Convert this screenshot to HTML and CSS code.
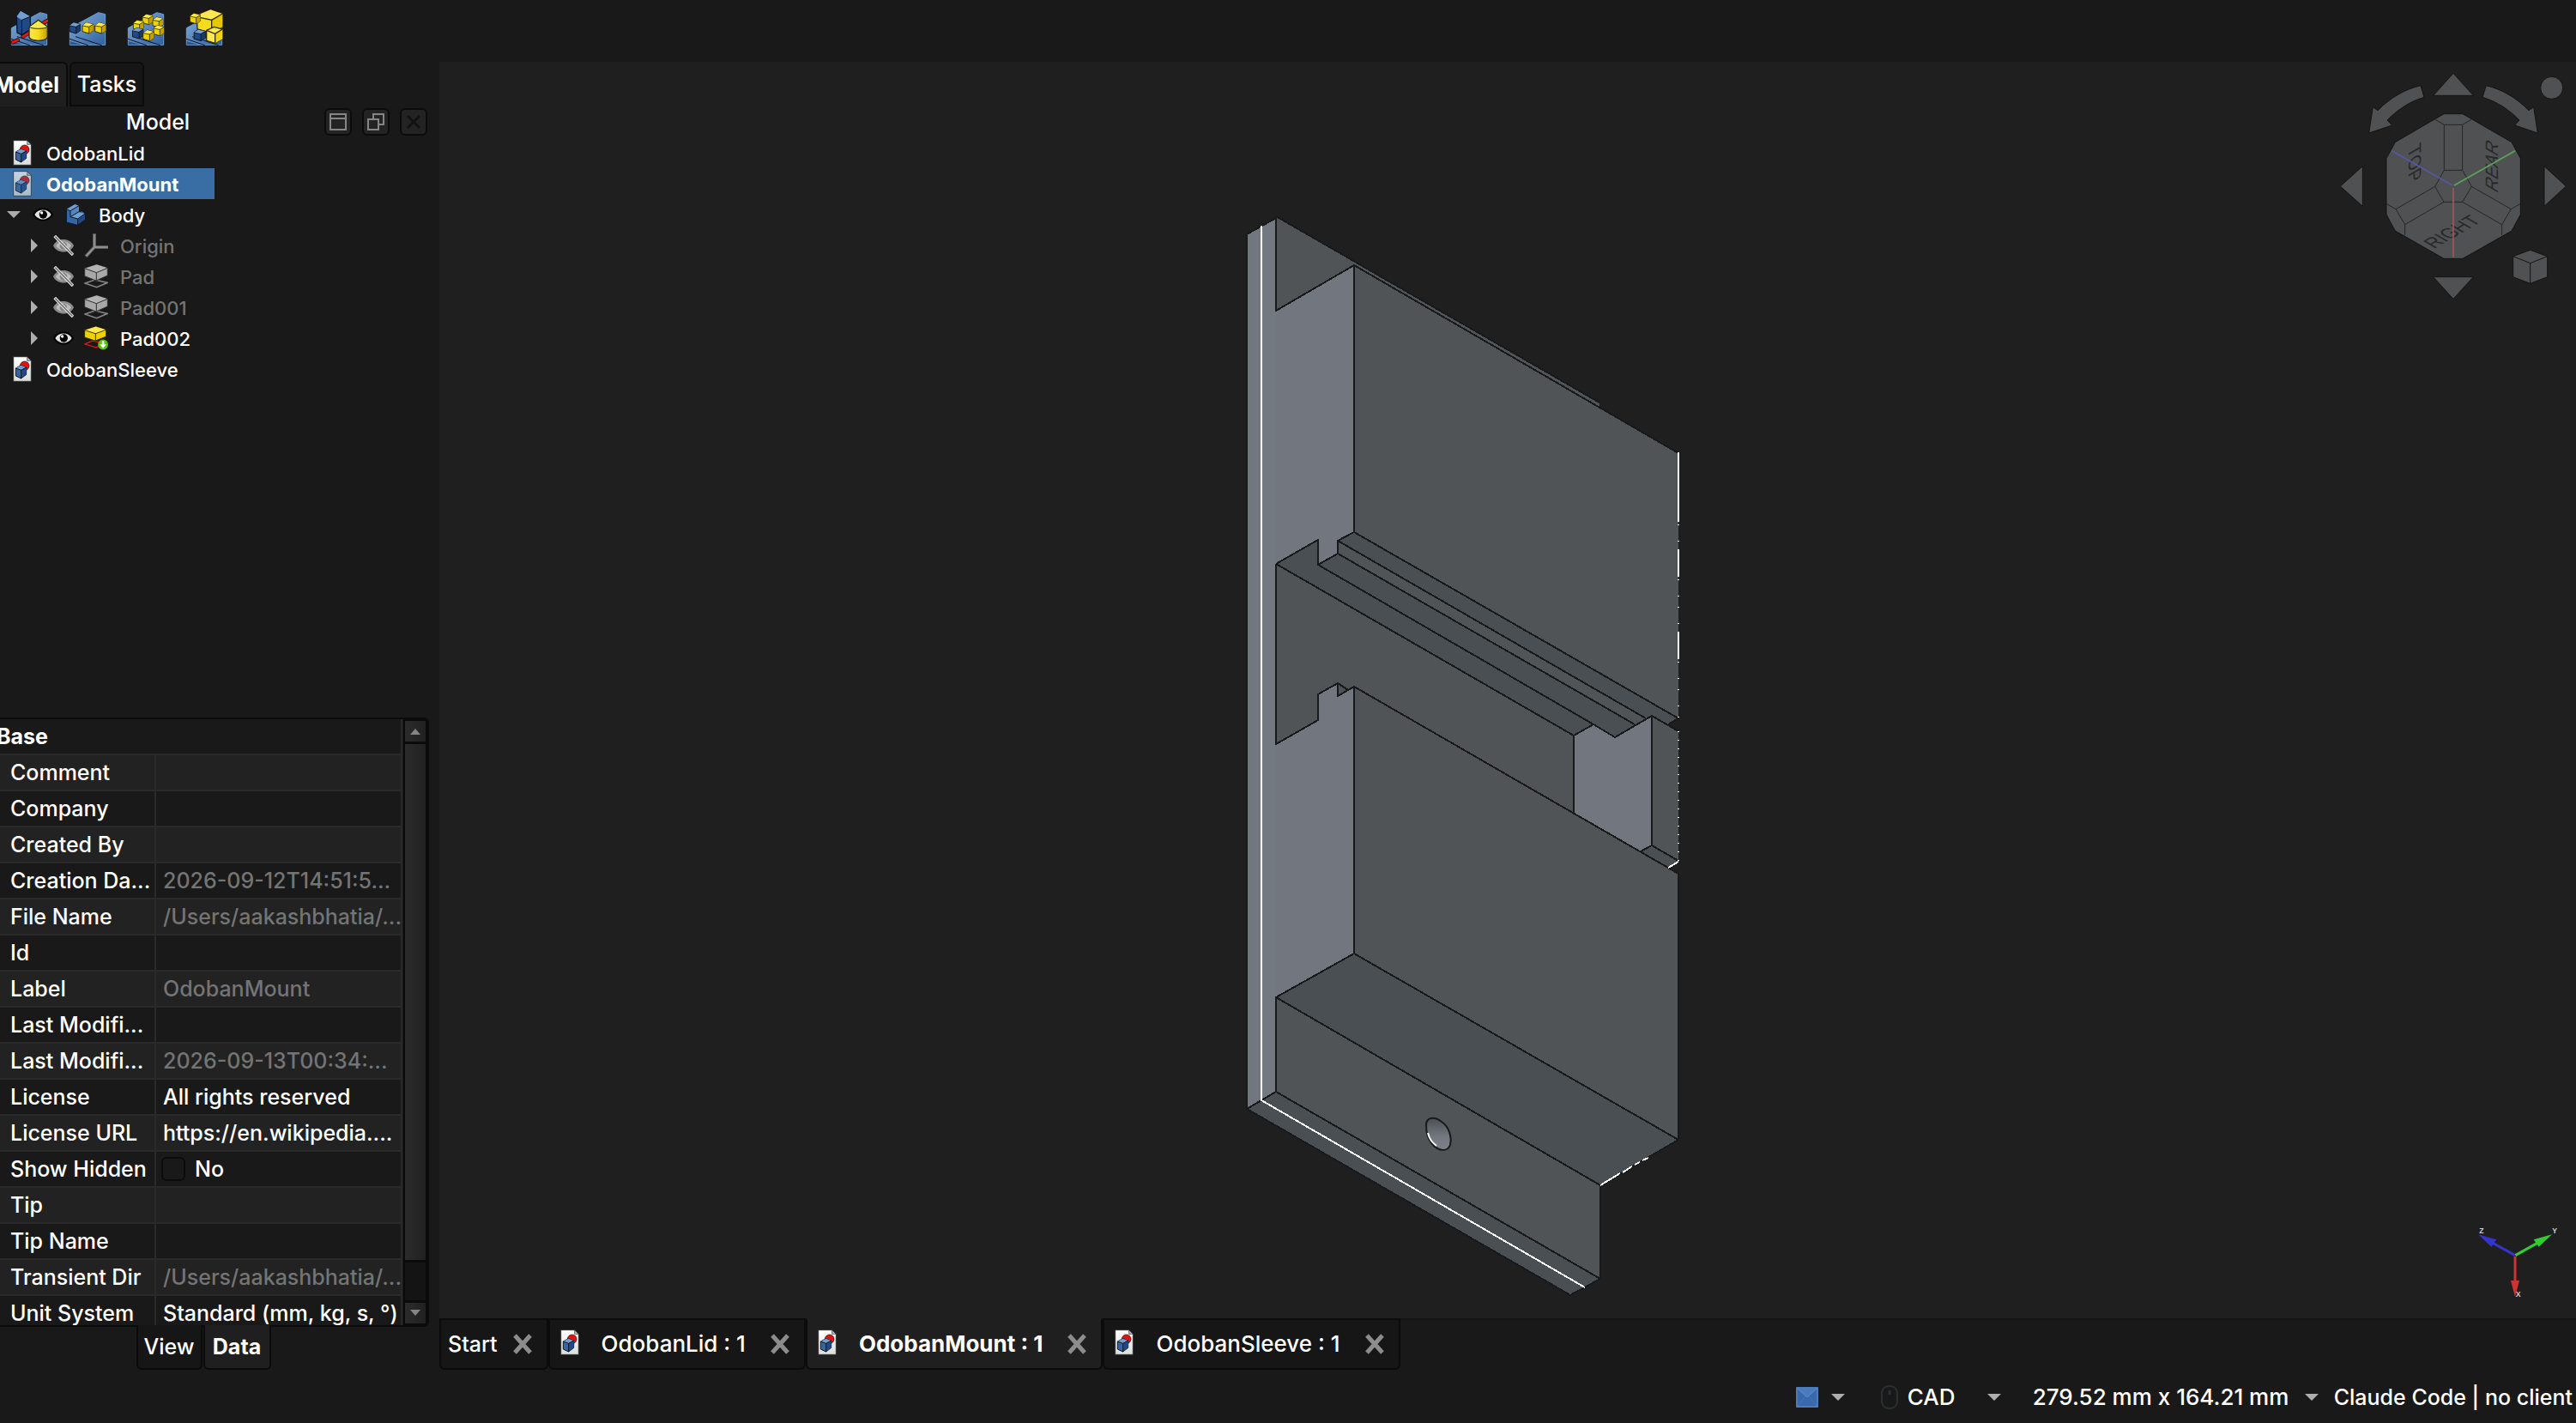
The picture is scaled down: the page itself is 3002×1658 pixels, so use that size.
FILE: index.html
```html
<!DOCTYPE html>
<html lang="en">
<head>
<meta charset="utf-8">
<title>OdobanMount</title>
<link rel="stylesheet" href="styles.css">
</head>
<body>
<svg class="defs" aria-hidden="true">
  <defs>
    <linearGradient id="gBlue" x1="0" y1="0" x2="1" y2="1"><stop offset="0" stop-color="#85afdc"/><stop offset="1" stop-color="#2f5f9f"/></linearGradient>
    <linearGradient id="gYellow" x1="0" y1="0" x2="1" y2="0"><stop offset="0" stop-color="#fce94f"/><stop offset=".5" stop-color="#f5dc1e"/><stop offset="1" stop-color="#c4a000"/></linearGradient>
    <linearGradient id="gPage" x1="0" y1="0" x2="0" y2="1"><stop offset="0" stop-color="#ffffff"/><stop offset="1" stop-color="#dcdeda"/></linearGradient>
    <linearGradient id="gHole" x1="0" y1="0" x2="0" y2="1"><stop offset="0" stop-color="#4c5054"/><stop offset=".6" stop-color="#747981"/><stop offset="1" stop-color="#7d828a"/></linearGradient>
  </defs>
  <symbol id="cubeYellow" viewBox="0 0 42 44">
    <path d="M2 14 16 3 40 9 40 31 25 41 2 34Z" fill="#edd400" stroke="#302b00" stroke-width="3" stroke-linejoin="round"/>
    <path d="M2 14 16 3 40 9 25 18Z" fill="#fce94f"/><path d="M25 18 40 9V31L25 41Z" fill="#c4a000"/>
    <path d="M2 14 25 18V41M25 18 40 9" fill="none" stroke="#302b00" stroke-width="2.500"/>
  </symbol>
  <symbol id="cubeBlue" viewBox="0 0 42 44">
    <path d="M2 14 16 3 40 9 40 31 25 41 2 34Z" fill="#204a87" stroke="#0b1521" stroke-width="3" stroke-linejoin="round"/>
    <path d="M2 14 16 3 40 9 25 18Z" fill="#729fcf"/><path d="M25 18 40 9V31L25 41Z" fill="#163a6c"/>
    <path d="M2 14 25 18V41M25 18 40 9" fill="none" stroke="#0b1521" stroke-width="2.500"/>
  </symbol>
  <symbol id="wedge" viewBox="0 0 132 132">
    <path d="M4 68 104 14 128 20V127H4Z" fill="url(#gBlue)" stroke="#729fcf" stroke-width="3"/>
    <path d="M3 106 68 128M24 98 116 128" fill="none" stroke="#0b1521" stroke-width="3"/>
    <path d="M5 114 44 126H5Z" fill="#2b5797"/>
  </symbol>
  <symbol id="doc" viewBox="0 0 66 90">
    <path d="M2 2H50L64 16V88H2Z" fill="url(#gPage)" stroke="#2e3436" stroke-width="3"/>
    <path d="M50 2 64 16H50Z" fill="#babdb6" stroke="#2e3436" stroke-width="2"/>
    <circle cx="41" cy="34" r="16" fill="#dc1414" stroke="#280000" stroke-width="2"/>
    <path d="M10 42 28 32 47 39 47 64 29 78 10 69Z" fill="#3465a4" stroke="#0b1521" stroke-width="3"/>
    <path d="M10 42 28 32 47 39 29 49Z" fill="#729fcf"/><path d="M29 49 47 39V64L29 78Z" fill="#204a87"/>
    <path d="M10 42 29 49V78M29 49 47 39" fill="none" stroke="#0b1521" stroke-width="3"/>
  </symbol>
  <symbol id="eye" viewBox="0 0 72 48">
    <path d="M0 24C14-6 58-6 72 24 58 54 14 54 0 24Z" fill="#000"/>
    <path d="M7 24C20 2 52 2 65 24 52 46 20 46 7 24Z" fill="#e4e4e4"/>
    <circle cx="37" cy="24" r="14" fill="#000"/><circle cx="32" cy="18" r="5" fill="#fff"/>
  </symbol>
  <symbol id="eyeOff" viewBox="0 0 72 72">
    <path d="M0 37C14 8 58 8 72 37 58 66 14 66 0 37Z" fill="#8c8c8c"/>
    <path d="M9 37C22 18 50 18 63 37 50 56 22 56 9 37Z" fill="#bdbdbd"/>
    <circle cx="36" cy="37" r="13" fill="#858585"/>
    <path d="M5 3 69 69" stroke="#dedede" stroke-width="11"/><path d="M7 5 67 67" stroke="#686868" stroke-width="4"/>
  </symbol>
  <symbol id="padOff" viewBox="0 0 84 84">
    <path d="M3 66 38 54 82 64 44 80Z" fill="none" stroke="#858585" stroke-width="5"/>
    <path d="M2 14 44 1 82 13V39L42 57 2 41Z" fill="#a8a8a8" stroke="#303030" stroke-width="3"/>
    <path d="M2 14 44 1 82 13 43 29Z" fill="#b4b4b4"/><path d="M2 14 43 29V56M43 29 82 13" fill="none" stroke="#303030" stroke-width="3"/>
  </symbol>
  <symbol id="right" viewBox="0 0 24 48"><path d="M0 0 24 24 0 48Z" fill="#aeaeae"/></symbol>
  <symbol id="down" viewBox="0 0 48 24"><path d="M0 0H48L24 24Z" fill="#aeaeae"/></symbol>
  <symbol id="cross" viewBox="0 0 24 24"><path d="M3 2 21 22M21 2 3 22" stroke="#8c8c8c" stroke-width="5"/></symbol>
</svg>

<div class="app">
  <header class="toolbar">
    <button class="tool" aria-label="Mirrored"><svg viewBox="0 0 132 132">
      <use href="#wedge"/>
      <path d="M8 118 26 110M44 98 62 86M116 50 130 42" stroke="#280000" stroke-width="14" stroke-linecap="round"/>
      <path d="M8 118 26 110M44 98 62 86M116 50 130 42" stroke="#e01818" stroke-width="9" stroke-linecap="round"/>
      <path d="M22 28 36 8 70 28V74L40 92 24 84Z" fill="#204a87" stroke="#0b1521" stroke-width="4"/>
      <path d="M22 28 36 8 70 28 40 40Z" fill="#729fcf"/><path d="M40 40V90M40 40 70 28" stroke="#0b1521" stroke-width="3"/>
      <path d="M66 64V100C72 116 124 116 130 100V64L98 40Z" fill="url(#gYellow)" stroke="#302b00" stroke-width="4"/>
      <path d="M66 64 98 41 130 64C122 72 74 72 66 64Z" fill="#fce94f" stroke="#302b00" stroke-width="3"/>
    </svg></button>
    <button class="tool" aria-label="Linear pattern"><svg viewBox="0 0 132 132">
      <use href="#wedge"/><use href="#cubeBlue" x="1" y="46" width="42" height="44"/>
      <use href="#cubeYellow" x="46" y="46" width="42" height="44"/><use href="#cubeYellow" x="90" y="46" width="42" height="44"/>
    </svg></button>
    <button class="tool" aria-label="Polar pattern"><svg viewBox="0 0 132 132">
      <use href="#wedge"/><use href="#cubeYellow" x="52" y="17" width="40" height="42"/>
      <use href="#cubeYellow" x="20" y="38" width="40" height="42"/><use href="#cubeYellow" x="88" y="27" width="40" height="42"/>
      <use href="#cubeBlue" x="17" y="64" width="42" height="44"/><use href="#cubeYellow" x="91" y="56" width="40" height="42"/>
      <use href="#cubeYellow" x="54" y="72" width="42" height="44"/>
    </svg></button>
    <button class="tool" aria-label="Multi-transform"><svg viewBox="0 0 132 132">
      <use href="#wedge"/>
      <path d="M40 22 88 4 130 18V64L92 86 42 72Z" fill="#f3dc20" stroke="#302b00" stroke-width="4"/>
      <path d="M54 18 88 4 130 18 92 40 54 32Z" fill="#fce94f"/><path d="M92 40 130 18V64L92 86Z" fill="#e4c800"/><path d="M54 32 92 40V86M92 40 130 18" fill="none" stroke="#302b00" stroke-width="4"/>
      <use href="#cubeYellow" x="14" y="14" width="40" height="42"/>
      <use href="#cubeBlue" x="28" y="70" width="44" height="46"/>
      <path d="M74 76 100 64 130 72V106L104 121 74 112Z" fill="#fce94f" stroke="#302b00" stroke-width="4"/>
      <path d="M104 88 130 72V106L104 121Z" fill="#f0d60a"/><path d="M74 76 104 88V120M104 88 130 72" fill="none" stroke="#302b00" stroke-width="4"/>
    </svg></button>
  </header>

  <aside class="dock">
    <nav class="dock-tabs">
      <button class="tab tab-model">Model</button><button class="tab tab-tasks">Tasks</button>
    </nav>
    <div class="dock-title">
      <h2>Model</h2>
      <button class="mini" aria-label="Auto hide"><svg viewBox="0 0 32 32"><path d="M7 7H25V25H7ZM7 12H25" fill="none" stroke="#858585" stroke-width="2"/></svg></button>
      <button class="mini" aria-label="Float"><svg viewBox="0 0 32 32"><path d="M13 12V7H25V19H20" fill="none" stroke="#858585" stroke-width="2"/><path d="M7 13H19V25H7Z" fill="none" stroke="#858585" stroke-width="2"/></svg></button>
      <button class="mini" aria-label="Close panel"><svg viewBox="0 0 32 32"><path d="M9 9 23 23M23 9 9 23" stroke="#111" stroke-width="3"/></svg></button>
    </div>
    <ul class="tree">
      <li class="root"><svg class="doc"><use href="#doc"/></svg><span>OdobanLid</span></li>
      <li class="root selected"><svg class="doc"><use href="#doc"/></svg><span>OdobanMount</span></li>
      <li class="body"><svg class="arrow-down"><use href="#down"/></svg><svg class="eye"><use href="#eye"/></svg><svg class="part" viewBox="0 0 72 78">
        <path d="M4 20 34 3 48 8V30L58 26 69 34V56L42 76 4 66Z" fill="#3465a4" stroke="#0b1521" stroke-width="3"/>
        <path d="M4 20 34 3 48 8 18 26Z" fill="#729fcf"/><path d="M18 47 46 30 69 36 44 54Z" fill="#729fcf"/><path d="M18 26 48 8V30L18 47Z" fill="#5585c0"/><path d="M44 54 69 36V56L42 76Z" fill="#204a87"/>
        <path d="M4 20 18 26V47L44 54V75M18 26 48 8M18 47 48 29M44 54 69 36" fill="none" stroke="#0b1521" stroke-width="3"/></svg><span>Body</span></li>
      <li class="child off"><svg class="arrow-right"><use href="#right"/></svg><svg class="eye"><use href="#eyeOff"/></svg><svg class="feature" viewBox="0 0 84 84"><path d="M36 1V48H84M36 48 6 80" fill="none" stroke="#6f6f6f" stroke-width="11"/><path d="M36 3V48H82M36 48 8 78" fill="none" stroke="#999" stroke-width="4"/></svg><span>Origin</span></li>
      <li class="child off"><svg class="arrow-right"><use href="#right"/></svg><svg class="eye"><use href="#eyeOff"/></svg><svg class="feature"><use href="#padOff"/></svg><span>Pad</span></li>
      <li class="child off"><svg class="arrow-right"><use href="#right"/></svg><svg class="eye"><use href="#eyeOff"/></svg><svg class="feature"><use href="#padOff"/></svg><span>Pad001</span></li>
      <li class="child"><svg class="arrow-right"><use href="#right"/></svg><svg class="eye"><use href="#eye"/></svg><svg class="feature" viewBox="0 0 90 88">
        <path d="M3 66 30 54 80 64 44 79Z" fill="none" stroke="#e01818" stroke-width="4"/>
        <path d="M2 14 44 1 82 13V38L42 54 2 41Z" fill="#edd400" stroke="#302b00" stroke-width="3"/><path d="M2 14 44 1 82 13 43 27Z" fill="#fce94f"/><path d="M2 14 43 27V54M43 27 82 13" fill="none" stroke="#302b00" stroke-width="3"/>
        <circle cx="71" cy="68" r="19" fill="#5fc20d"/><path d="M67 54H75V67H83L71 82 59 67H67Z" fill="#fff"/></svg><span>Pad002</span></li>
      <li class="root"><svg class="doc"><use href="#doc"/></svg><span>OdobanSleeve</span></li>
    </ul>
    <section class="props">
      <div class="props-view">
        <table>
          <colgroup><col class="col-name"><col></colgroup>
          <thead><tr><th colspan="2">Base</th></tr></thead>
          <tbody>
            <tr><th>Comment</th><td></td></tr>
            <tr><th>Company</th><td></td></tr>
            <tr><th>Created By</th><td></td></tr>
            <tr><th>Creation Da...</th><td class="ro">2026-09-12T14:51:5...</td></tr>
            <tr><th>File Name</th><td class="ro">/Users/aakashbhatia/...</td></tr>
            <tr><th>Id</th><td></td></tr>
            <tr><th>Label</th><td class="ro">OdobanMount</td></tr>
            <tr><th>Last Modifi...</th><td></td></tr>
            <tr><th>Last Modifi...</th><td class="ro">2026-09-13T00:34:...</td></tr>
            <tr><th>License</th><td>All rights reserved</td></tr>
            <tr><th>License URL</th><td>https://en.wikipedia....</td></tr>
            <tr><th>Show Hidden</th><td class="check"><label><input type="checkbox">No</label></td></tr>
            <tr><th>Tip</th><td></td></tr>
            <tr><th>Tip Name</th><td></td></tr>
            <tr><th>Transient Dir</th><td class="ro">/Users/aakashbhatia/...</td></tr>
            <tr><th>Unit System</th><td>Standard (mm, kg, s, °)</td></tr>
          </tbody>
        </table>
      </div>
      <div class="scrollbar">
        <button aria-label="Scroll up"><svg viewBox="0 0 24 24"><path d="M6 16 12 9 18 16Z" fill="#858585"/></svg></button>
        <div class="thumb"></div><div class="trough"></div>
        <button aria-label="Scroll down"><svg viewBox="0 0 24 24"><path d="M6 8H18L12 15Z" fill="#858585"/></svg></button>
      </div>
    </section>
    <nav class="props-tabs"><button class="tab view">View</button><button class="tab data">Data</button></nav>
  </aside>

  <main class="viewport">
    <svg class="model" viewBox="512 72 2490 1464" shape-rendering="crispEdges" role="img" aria-label="Mount part">
      <path d="M1453 273 1487 254 1578 309V1111L1487 1162V1272L1453 1292Z" fill="#72777f"/>
      <path d="M1471 264 1487 254V1272L1471 1282Z" fill="#727980"/>
      <path d="M1487 253 1864 470V475L1956 528V836L1578 620V309L1487 362Z" fill="#505456"/>
      <path d="M1487 657 1536 629V658L1559 645V630L1578 620 1955 837 1944 844 1925 834 1882 859 1857 844 1834 857Z" fill="#4a4f53"/>
      <path d="M1559 630 1918 837 1905 844 1559 645Z" fill="#505456"/>
      <path d="M1487 657 1834 857V948L1578 800 1559 811V796L1536 809V839L1487 867Z" fill="#505456"/>
      <path d="M1834 857 1857 844 1882 859 1925 834V985L1912 992 1834 948Z" fill="#72777f"/>
      <path d="M1925 834 1956 852V1003L1925 985Z" fill="#505456"/>
      <path d="M1912 992 1925 985 1956 1003 1944 1011Z" fill="#4a4f53"/>
      <path d="M1578 800 1956 1018V1328L1578 1111Z" fill="#505456"/>
      <path d="M1578 1111 1956 1328 1865 1381 1487 1162Z" fill="#4a4f53"/>
      <path d="M1487 1162 1865 1381V1490L1487 1272Z" fill="#505456"/>
      <path d="M1453 1292 1487 1272 1865 1490 1830 1509Z" fill="#4a4f53"/>
      <g fill="none" stroke="#17191a" stroke-width="2">
        <path d="M1453 1292V273L1487 254V362L1578 309V620M1487 252 1864 469M1578 309 1956 528"/>
        <path d="M1487 657 1536 629V658L1559 645V630L1578 620 1956 837 1944 844M1559 630 1918 837M1559 645 1905 844M1536 658 1857 844M1487 657 1834 857 1857 844 1882 859 1925 834 1956 852M1487 657V867L1536 839V809L1559 796 1571 804M1559 796V811L1578 800 1956 1018V1328M1834 857V948M1925 834V985L1956 1003M1925 985 1912 992"/>
        <path d="M1578 800V1111L1956 1328 1865 1381V1490L1830 1509 1453 1292 1487 1272V1162L1865 1381M1487 1162 1578 1111M1487 1272 1865 1490"/>
      </g>
      <g fill="none" stroke="#fff" stroke-width="2">
        <path d="M1470 263V1282L1847 1500M1944 1011 1956 1004"/>
        <path d="M1956 527V608M1956 640V672M1956 736V768"/>
        <path d="M1956 611V837" stroke-dasharray="1 18 1 12"/>
        <path d="M1956 852V1003" stroke-dasharray="1 9"/>
        <path d="M1865 1381 1888 1367M1891 1366 1902 1359M1905 1357 1911 1354M1914 1352 1921 1349"/>
      </g>
      <g shape-rendering="auto">
        <path d="M1662 1311C1662 1302 1671 1300 1680 1307 1689 1313 1692 1325 1690 1334 1687 1342 1677 1342 1669 1333 1664 1327 1662 1319 1662 1311Z" fill="url(#gHole)" stroke="#17191a" stroke-width="2"/>
        <path d="M1664 1320C1666 1328 1669 1331 1674 1335" fill="none" stroke="#fff" stroke-width="2"/>
      </g>
    </svg>

    <svg class="navcube" viewBox="0 36 900 924" role="img" aria-label="Navigation cube">
      <g fill="#505153" stroke="#141414" stroke-width="3" stroke-linejoin="round">
        <path d="M471 76 541 154H401ZM401 788H541L471 865ZM154 401V541L76 471ZM789 401 865 471 789 541Z"/>
        <path d="M357 119 369 160C320 174 278 202 240 240L257 258 176 285 190 194 207 206C248 164 300 132 357 119Z"/>
        <path d="M586 119 573 160C622 174 664 202 702 240L686 258 766 285 752 194 735 206C694 164 642 132 586 119Z"/>
        <circle cx="815" cy="127" r="39"/>
        <path d="M740 694 800 716V788L740 811 680 788V716Z"/>
        <path d="M438 218H504L675 317 706 374V570L675 627 504 724H438L268 627 237 570V374L268 317Z"/>
      </g>
      <path d="M680 716 740 740 800 716M740 740V811" fill="none" stroke="#141414" stroke-width="3"/>
      <path d="M408 238 439 256H503L534 238M439 256V415M503 256V415M439 415H503L535 472 503 526H438L407 472ZM407 472 270 551 237 532M438 526 302 605 270 551M302 605V642M535 472 673 551 706 532M503 526 641 605 673 551M641 605V642" fill="none" stroke="#252627" stroke-width="3"/>
      <g class="faces">
        <text transform="translate(316 340) rotate(90) skewX(30)">TOP</text>
        <text transform="translate(626 498) rotate(-90) skewX(-30)">REAR</text>
        <text transform="translate(404 690) rotate(-30) skewX(30)">RIGHT</text>
      </g>
      <g stroke-width="5"><path d="M256 347 468 468" stroke="#5657a5"/><path d="M474 468 687 347" stroke="#5aa55a"/><path d="M471 476V720" stroke="#a5565a"/></g>
    </svg>

    <svg class="axes" viewBox="0 0 426 408" role="img" aria-label="Axes">
      <path d="M213 188 130 142" stroke="#3434cc" stroke-width="9"/><path d="M84 115 148 133 130 158Z" fill="#3434cc"/>
      <path d="M214 188 296 142" stroke="#33cc33" stroke-width="9"/><path d="M342 115 278 133 296 158Z" fill="#33cc33"/>
      <path d="M213 192V280" stroke="#cc3333" stroke-width="9"/><path d="M198 276H228L213 334Z" fill="#cc3333"/>
      <text x="88" y="110">Z</text><text x="343" y="110">Y</text><text x="215" y="332">X</text>
    </svg>
  </main>

  <nav class="doc-tabs">
    <div class="doc-tab start"><button>Start</button><button aria-label="Close Start"><svg><use href="#cross"/></svg></button></div>
    <div class="doc-tab"><svg class="doc"><use href="#doc"/></svg><button>OdobanLid : 1</button><button aria-label="Close OdobanLid"><svg><use href="#cross"/></svg></button></div>
    <div class="doc-tab current"><svg class="doc"><use href="#doc"/></svg><button>OdobanMount : 1</button><button aria-label="Close OdobanMount"><svg><use href="#cross"/></svg></button></div>
    <div class="doc-tab"><svg class="doc"><use href="#doc"/></svg><button>OdobanSleeve : 1</button><button aria-label="Close OdobanSleeve"><svg><use href="#cross"/></svg></button></div>
  </nav>

  <footer class="status">
    <button class="notify" aria-label="Notifications"><svg class="mail" viewBox="0 0 26 24"><path d="M0 0H26V24H0Z" fill="#3969ac"/><path d="M2 2 13 12 24 2" fill="#4a7cbd" stroke="#5e8fca"/><path d="M1 1H25V23H1Z" fill="none" stroke="#5e8fca" stroke-width="1"/><path d="M2 22 11 11M24 22 15 11" stroke="#4474b4"/></svg><svg class="drop"><use href="#down"/></svg></button>
    <label class="nav-style"><svg class="mouse" viewBox="0 0 20 28"><rect x="1" y="1" width="18" height="26" rx="8" fill="none" stroke="#2a3032" stroke-width="2"/><path d="M10 6V11" stroke="#2a3032" stroke-width="3"/></svg><select aria-label="Navigation style"><option>CAD</option></select><svg class="drop"><use href="#down"/></svg></label>
    <button class="dims">279.52 mm x 164.21 mm<svg class="drop"><use href="#down"/></svg></button>
    <span class="client">Claude Code | no client</span>
  </footer>
</div>
</body>
</html>
```
FILE: styles.css
```css
* { box-sizing: border-box; }
body {
  margin: 0;
  background: #191919;
  color: #fff;
  font: 500 25px/32px Inter, "Liberation Sans", sans-serif;
}
button, select {
  margin: 0; padding: 0; border: 0;
  background: none; color: inherit; font: inherit;
}
svg { display: block; flex: none; }
.defs { position: absolute; width: 0; height: 0; }

.app {
  display: grid;
  grid-template: 72px minmax(0, 1fr) 60px 62px / 512px minmax(0, 1fr);
  height: 100vh;
  overflow: hidden;
}
.toolbar { grid-column: 1 / 3; display: flex; align-items: flex-start; gap: 24px; padding: 10px 12px; }
.tool svg { width: 44px; height: 44px; }

/* left dock */
.dock { grid-row: 2 / 4; display: flex; flex-direction: column; min-height: 0; }
.dock-tabs { display: flex; gap: 2px; }
.tab { border: 2px solid #0b0b0b; height: 52px; }
.tab-model { width: 79px; border-left: 0; border-bottom: 0; border-top-right-radius: 6px; background: #1f1f1f; font-weight: 700; padding-right: 8px; display: flex; align-items: center; justify-content: flex-end; overflow: hidden; }
.tab-tasks { width: 87px; border-radius: 6px 6px 0 0; background: #161616; }
.dock-title { display: flex; align-items: center; gap: 12px; height: 36px; padding-right: 14px; }
.dock-title h2 { flex: 1; margin: 0; padding-left: 2px; text-align: center; font-size: 25px; font-weight: 500; }
.mini { width: 32px; height: 32px; border: 2px solid #0b0b0b; border-radius: 6px; background: #232323; }
.mini svg { width: 32px; height: 32px; margin: -2px; }

.tree { flex: 1; min-height: 0; margin: 0; padding: 0; list-style: none; font-size: 22px; }
.tree li { display: flex; align-items: center; height: 36px; width: 250px; }
.tree span { padding-top: 2px; }
.tree .root { padding-left: 15px; gap: 17px; }
.tree .selected { background: #386ea3; font-weight: 700; }
.tree .body { padding-left: 8px; }
.tree .child { padding-left: 36px; }
.tree .off { color: #747474; }
.doc { width: 22px; height: 30px; }
.selected .doc { opacity: .7; }
.arrow-down { width: 16px; height: 8px; margin-right: 14px; }
.arrow-right { width: 8px; height: 16px; margin-right: 18px; }
.eye { width: 24px; height: 24px; margin-right: 12px; }
.part { width: 24px; height: 26px; margin-left: 2px; margin-right: 15px; }
.feature { width: 28px; height: 28px; margin-right: 14px; }

.props { display: flex; height: 710px; width: 500px; border: 2px solid #0b0b0b; border-left: 0; border-right-width: 4px; border-top-right-radius: 6px; border-bottom-right-radius: 6px; }
.props-view { flex: 1; overflow: hidden; background: #191919; }
table { width: 469px; border-collapse: collapse; table-layout: fixed; }
.col-name { width: 181px; }
th, td { height: 42px; padding: 0; border-bottom: 2px solid #2a2a2a; border-right: 2px solid #2a2a2a; text-align: left; font-weight: 500; white-space: nowrap; }
thead th { height: 41px; font-weight: 700; }
thead th:first-child { text-indent: -4px; }
tbody th { padding-left: 12px; }
tbody td { padding-left: 8px; }
tbody tr:nth-child(odd) { background: #222; }
.ro { color: #747474; }
tbody .check { padding-left: 6px; }
.check label { display: flex; align-items: center; gap: 11px; }
.check input { appearance: none; width: 28px; height: 28px; margin: 0; border: 2px solid #0b0b0b; border-radius: 6px; background: #191919; }
.scrollbar { display: flex; flex-direction: column; gap: 3px; width: 26px; padding: 2px 0 2px 2px; background: #0b0b0b; }
.scrollbar button, .thumb { background: linear-gradient(90deg, #2b2b2b, #212121); }
.scrollbar button { height: 24px; }
.scrollbar svg { width: 24px; height: 24px; }
.thumb { flex: 1; }
.trough { height: 44px; background: #141414; }
.props-tabs { display: flex; justify-content: center; height: 52px; width: 474px; margin-top: -2px; gap: 1px; }
.props-tabs .tab { border-top: 0; border-radius: 0 0 6px 6px; }
.view { width: 77px; background: #161616; }
.data { width: 79px; background: #1f1f1f; font-weight: 700; }

/* 3D view */
.viewport { position: relative; background: #1f1f1f; min-height: 0; overflow: hidden; }
.model { width: 100%; height: 100%; }
.navcube { position: absolute; top: 0; right: 0; width: 300px; height: 308px; }
.axes { position: absolute; right: 0; bottom: 0; width: 142px; height: 136px; }
.faces { font: 400 62px "Liberation Sans", sans-serif; fill: #28292a; }
.axes text { font: 700 26px "Liberation Sans", sans-serif; fill: #d0d0d0; }

.doc-tabs { grid-column: 2; display: flex; border-top: 2px solid #151515; font-size: 26px; }
.doc-tab { display: flex; align-items: center; height: 60px; margin-top: -2px; padding: 0 16px 0 12px; border: 2px solid #0b0b0b; border-radius: 0 0 6px 6px; background: #161616; }
.doc-tab .doc { margin-right: 26px; margin-bottom: 4px; }
.doc-tab button + button { margin-left: 28px; }
.doc-tab button svg { width: 24px; height: 24px; }
.doc-tab.current { background: #1f1f1f; border-top-color: #1f1f1f; font-weight: 700; }
.doc-tab.start { padding-left: 8px; font-size: 25px; }
.doc-tab.start button + button { margin-left: 17px; }

.status { grid-column: 1 / 3; display: flex; align-items: center; justify-content: flex-end; padding: 2px 4px 0 0; }
.status button, .status label { display: flex; align-items: center; }
.drop { width: 16px; height: 8px; }
.mail { width: 26px; height: 24px; margin-right: 15px; }
.notify { margin-right: 42px; }
.mouse { width: 20px; height: 28px; margin-right: 11px; }
.nav-style select { appearance: none; width: 93px; }
.nav-style { margin-right: 37px; font-size: 26px; }
.status .dims { width: 333px; justify-content: space-between; margin-right: 18px; font-size: 26px; white-space: nowrap; }
```
